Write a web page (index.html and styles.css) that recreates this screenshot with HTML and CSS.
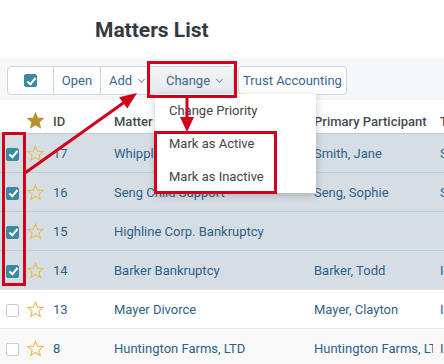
FILE: index.html
```html
<!DOCTYPE html>
<html>
<head>
<title>Matters List</title>
<link rel="stylesheet" href="styles.css">
</head>
<body>
<div class="page">
    <h1 class="title">Matters List</h1>

    <div class="toolbar">
        <div class="btn-group">
            <span class="seg seg-check"><span class="cb checked"></span></span>
            <span class="seg seg-open">Open</span>
            <span class="seg seg-add">Add <span class="chev"></span></span>
            <span class="seg seg-change">Change <span class="chev"></span>
                <div class="menu">
                    <div class="menu-item">Change Priority</div>
                    <div class="menu-item">Mark as Active</div>
                    <div class="menu-item">Mark as Inactive</div>
                </div>
            </span>
        </div>
        <span class="btn">Trust Accounting</span>
    </div>

    <svg width="0" height="0" class="defs">
        <defs>
            <path id="star" d="M8.5 1.2 L10.6 6.2 L16 6.6 L11.9 10.1 L13.2 15.4 L8.5 12.5 L3.8 15.4 L5.1 10.1 L1 6.6 L6.4 6.2 Z"/>
        </defs>
    </svg>

    <table class="matters">
        <colgroup>
            <col style="width:22px"><col style="width:24px"><col style="width:61px">
            <col style="width:200px"><col style="width:126px"><col style="width:120px">
        </colgroup>
        <tr class="head">
            <th></th>
            <th class="star-cell"><svg class="star star-solid" width="17" height="17"><use href="#star"/></svg></th>
            <th>ID</th>
            <th>Matter Name</th>
            <th>Primary Participant</th>
            <th>Type</th>
        </tr>
        <tr class="sel">
            <td class="cb-cell"><span class="cb checked"></span></td>
            <td class="star-cell"><svg class="star" width="17" height="17"><use href="#star"/></svg></td>
            <td>17</td><td>Whipple Estate</td><td>Smith, Jane</td><td>Standard</td>
        </tr>
        <tr class="sel">
            <td class="cb-cell"><span class="cb checked"></span></td>
            <td class="star-cell"><svg class="star" width="17" height="17"><use href="#star"/></svg></td>
            <td>16</td><td>Seng Child Support</td><td>Seng, Sophie</td><td>Standard</td>
        </tr>
        <tr class="sel">
            <td class="cb-cell"><span class="cb checked"></span></td>
            <td class="star-cell"><svg class="star" width="17" height="17"><use href="#star"/></svg></td>
            <td>15</td><td>Highline Corp. Bankruptcy</td><td></td><td></td>
        </tr>
        <tr class="sel">
            <td class="cb-cell"><span class="cb checked"></span></td>
            <td class="star-cell"><svg class="star" width="17" height="17"><use href="#star"/></svg></td>
            <td>14</td><td>Barker Bankruptcy</td><td>Barker, Todd</td><td>Individual</td>
        </tr>
        <tr>
            <td class="cb-cell"><span class="cb"></span></td>
            <td class="star-cell"><svg class="star" width="17" height="17"><use href="#star"/></svg></td>
            <td>13</td><td>Mayer Divorce</td><td>Mayer, Clayton</td><td>Individual</td>
        </tr>
        <tr class="alt">
            <td class="cb-cell"><span class="cb"></span></td>
            <td class="star-cell"><svg class="star" width="17" height="17"><use href="#star"/></svg></td>
            <td>8</td><td>Huntington Farms, LTD</td><td>Huntington Farms, LTD</td><td>Individual</td>
        </tr>
    </table>

    <!-- annotations drawn over the screenshot -->
    <svg class="notes" width="444" height="364">
        <g fill="none" stroke="#d0021b" stroke-width="3">
            <rect x="148.5" y="62.5" width="87" height="34"/>
            <rect x="155.5" y="132.5" width="120" height="60"/>
            <rect x="3.5" y="133.5" width="21" height="151"/>
            <line x1="187" y1="97" x2="187" y2="118"/>
            <line x1="25" y1="173" x2="124" y2="102.5"/>
        </g>
        <g fill="#d0021b">
            <polygon points="180,117 194,117 187,132"/>
            <polygon points="137,93 127.3,108.6 119.1,97.2"/>
        </g>
    </svg>
</div>
</body>
</html>
```

FILE: styles.css
```css
html, body {
    margin: 0;
    overflow: hidden;
}

body {
    font-family: Roboto, "Noto Sans", sans-serif;
    background-color: white;
    color: #333;
}

.page {
    position: relative;
    width: 444px;
    height: 364px;
}

.title {
    margin: 0;
    height: 58px;
    box-sizing: border-box;
    padding: 16px 0 0 95px;
    font-size: 21px;
    line-height: 28px;
    font-weight: 700;
    color: #333a40;
}

/* toolbar */
.toolbar {
    display: flex;
    align-items: flex-start;
    gap: 4px;
    height: 42px;
    box-sizing: border-box;
    padding: 8px 7px 0 7px;
    background-color: #f6f7f8;
}

.btn-group {
    display: flex;
    height: 29px;
    border: 1px solid #ccd5dc;
    border-radius: 4px;
    background-color: white;
    box-sizing: border-box;
}

.seg {
    position: relative;
    display: flex;
    align-items: center;
    justify-content: center;
    gap: 7px;
    box-sizing: border-box;
    font-size: 13px;
    color: #3a6690;
    border-left: 1px solid #ccd5dc;
}

.seg-check {
    width: 45px;
    border-left: none;
}

.seg-open {
    width: 47px;
}

.seg-add {
    width: 48px;
    padding-left: 4px;
}

.seg-change {
    width: 85px;
    padding-left: 6px;
    background: linear-gradient(#f3f4f5, #e7eaed);
}

.chev {
    width: 4px;
    height: 4px;
    border-right: 1px solid #7f8e9b;
    border-bottom: 1px solid #7f8e9b;
    transform: rotate(45deg);
    margin-top: -3px;
}

.btn {
    display: flex;
    align-items: center;
    justify-content: center;
    width: 109px;
    height: 29px;
    box-sizing: border-box;
    border: 1px solid #ccd5dc;
    border-radius: 4px;
    background-color: white;
    font-size: 13px;
    color: #3a6690;
}

/* dropdown */
.menu {
    position: absolute;
    top: 27px;
    left: 6px;
    width: 161px;
    background-color: white;
    box-shadow: 0 2px 8px rgba(0, 0, 0, 0.22);
    z-index: 2;
}

.menu-item {
    height: 33px;
    line-height: 33px;
    padding-left: 14px;
    font-size: 13px;
    color: #444;
}

/* checkboxes */
.cb {
    display: inline-block;
    position: relative;
    width: 13px;
    height: 13px;
    box-sizing: border-box;
    border: 1px solid #c6cdd3;
    border-radius: 2px;
    background-color: white;
    vertical-align: middle;
}

.cb.checked {
    border-color: #3a8b9d;
    background-color: #3a8b9d;
}

.cb.checked::after {
    content: "";
    position: absolute;
    left: 3.5px;
    top: 0.5px;
    width: 3px;
    height: 7px;
    border-right: 2px solid white;
    border-bottom: 2px solid white;
    transform: rotate(40deg);
}

/* table */
.matters {
    table-layout: fixed;
    width: 553px;
    border-collapse: collapse;
    font-size: 13px;
}

.matters th, .matters td {
    padding: 0 0 0 7px;
    text-align: left;
    white-space: nowrap;
    overflow: hidden;
}

.matters th {
    height: 24px;
    padding-top: 9px;
    font-weight: 500;
    color: #444b53;
}

.matters td {
    height: 38px;
    color: #2f5f8a;
    border-top: 1px solid #e4e7ea;
}

.matters tr.sel td {
    background-color: #d5dee4;
    border-top-color: #c2ccd4;
}

.matters tr.alt td {
    background-color: #f8f8f8;
}

.matters .cb-cell {
    padding-left: 6px;
}

.matters .star-cell {
    padding-left: 5px;
}

.star {
    display: block;
    fill: none;
    stroke: #e6c05b;
    stroke-width: 1.2;
}

.star-solid {
    fill: #b8902c;
    stroke: #b8902c;
    margin-top: -2px;
}

.defs {
    position: absolute;
}

.notes {
    position: absolute;
    left: 0;
    top: 0;
    pointer-events: none;
    z-index: 3;
}
```
